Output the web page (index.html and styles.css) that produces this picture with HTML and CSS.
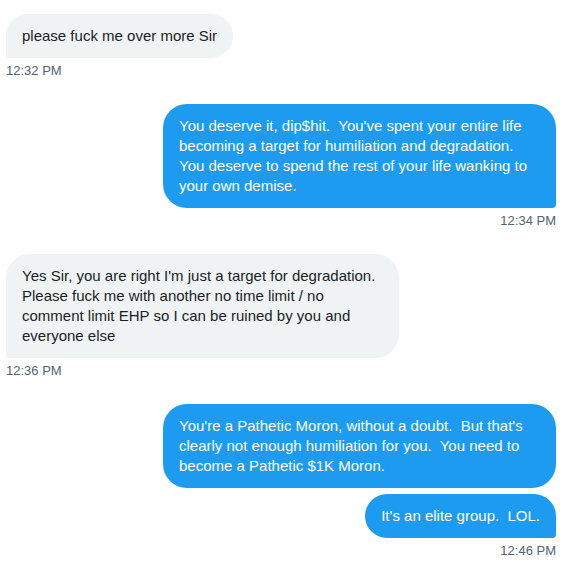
FILE: index.html
```html
<!DOCTYPE html>
<html lang="en">
<head>
    <meta charset="UTF-8">
    <meta name="viewport" content="width=device-width, initial-scale=1.0">
    <title>Messages</title>
    <link rel="stylesheet" href="styles.css">
</head>
<body>
    <div class="conversation">
        <!-- received -->
        <div class="group in">
            <div class="bubble last">please fuck me over more Sir</div>
            <div class="time">12:32 PM</div>
        </div>

        <!-- sent -->
        <div class="group out">
            <div class="bubble last">You deserve it, dip$hit.&nbsp; You've spent your entire life becoming a target for humiliation and degradation. You deserve to spend the rest of your life wanking to your own demise.</div>
            <div class="time">12:34 PM</div>
        </div>

        <div class="group in">
            <div class="bubble last">Yes Sir, you are right I'm just a target for degradation. Please fuck me with another no time limit / no comment limit EHP so I can be ruined by you and everyone else</div>
            <div class="time">12:36 PM</div>
        </div>

        <div class="group out">
            <div class="bubble">You're a Pathetic Moron, without a doubt.&nbsp; But that's clearly not enough humiliation for you.&nbsp; You need to become a Pathetic $1K Moron.</div>
            <div class="bubble last">It's an elite group.&nbsp; LOL.</div>
            <div class="time">12:46 PM</div>
        </div>
    </div>
</body>
</html>
```

FILE: styles.css
```css
body {
    margin: 0;
    background: #ffffff;
    font-family: "Liberation Sans", Arial, sans-serif;
    color: #0f1419;
}

.conversation {
    padding: 14px 7px 0 6px;
}

/* Message groups */
.group {
    display: flex;
    flex-direction: column;
    gap: 6px;
    padding-bottom: 25px;
}
.group.in {
    align-items: flex-start;
}
.group.out {
    align-items: flex-end;
}

.bubble {
    max-width: 361px;
    padding: 12px 16px;
    font-size: 15px;
    line-height: 20px;
    border-radius: 24px;
}
.in .bubble {
    background-color: #eff3f4;
    color: #1a1f24;
}
.in .bubble.last {
    border-bottom-left-radius: 4px;
}
.out .bubble {
    background-color: #1d9bf0;
    color: #ffffff;
}
.out .bubble.last {
    border-bottom-right-radius: 4px;
}

/* Timestamp under each group */
.time {
    margin-top: -1px;
    font-size: 13px;
    line-height: 16px;
    color: #536471;
}
```
